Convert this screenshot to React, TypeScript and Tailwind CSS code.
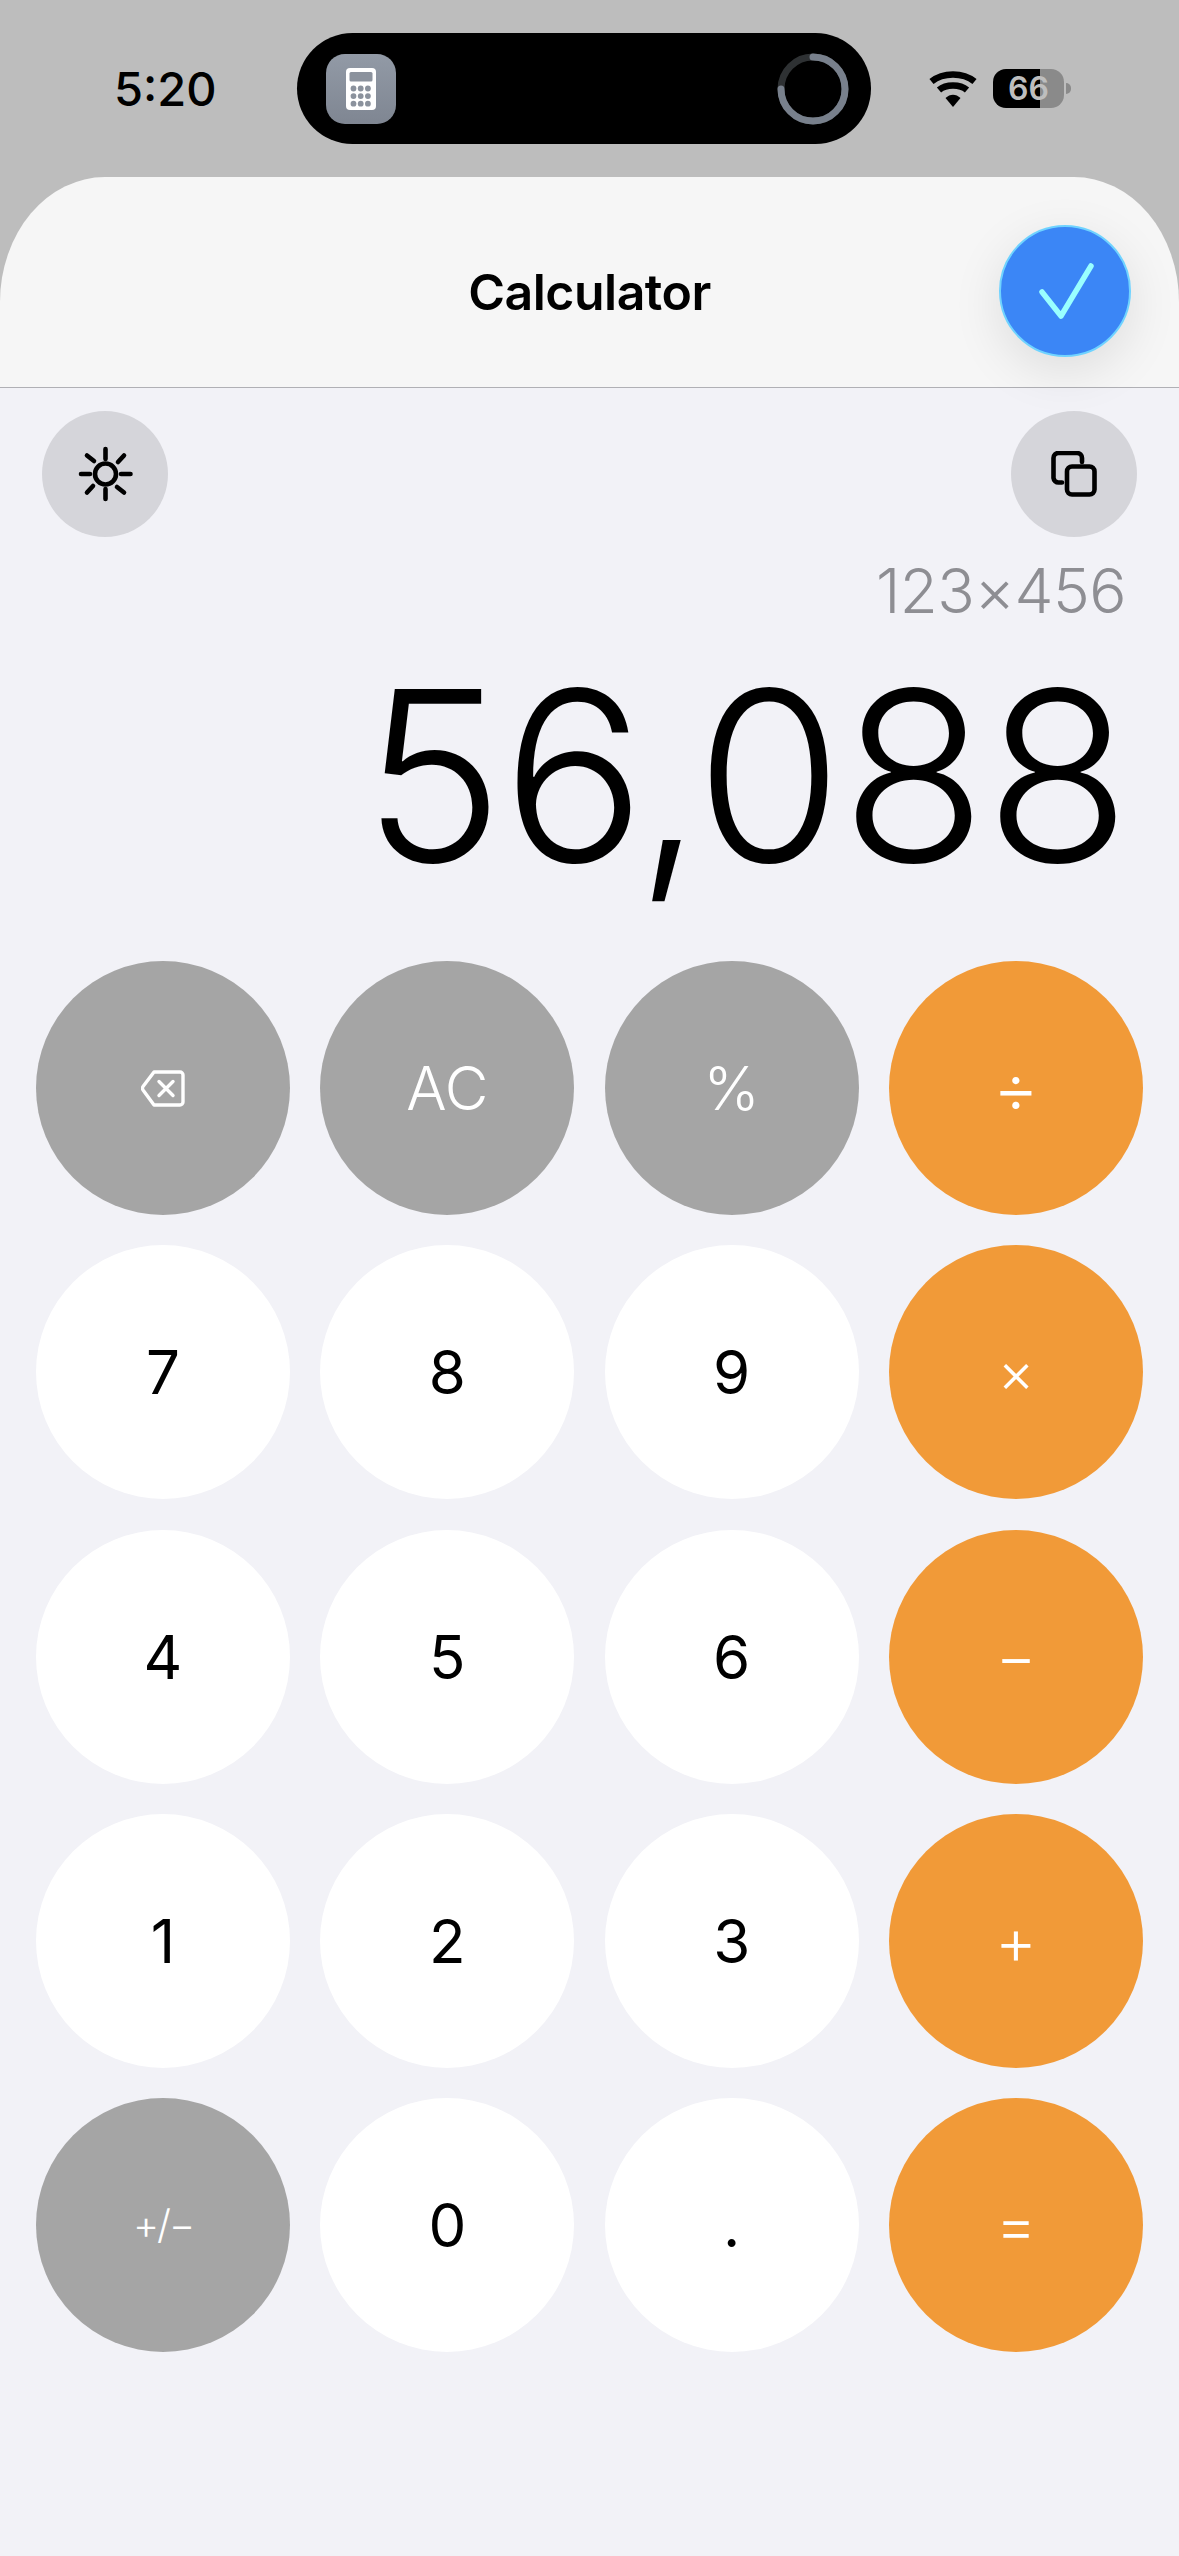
type Tone = 'gray' | 'white' | 'orange';

interface Key {
  label: string;
  tone: Tone;
  size?: string;
}

const TONE_CLASS: Record<Tone, string> = {
  gray: 'bg-[#a5a5a5] text-white font-[350]',
  white: 'bg-white text-black font-[380]',
  orange: 'bg-[#f19a38] text-white font-[350]',
};

const KEYS: Key[] = [
  { label: 'back', tone: 'gray' },
  { label: 'AC', tone: 'gray' },
  { label: '%', tone: 'gray' },
  { label: '÷', tone: 'orange', size: 'text-[70px]' },
  { label: '7', tone: 'white' },
  { label: '8', tone: 'white' },
  { label: '9', tone: 'white' },
  { label: '×', tone: 'orange', size: 'text-[56px]' },
  { label: '4', tone: 'white' },
  { label: '5', tone: 'white' },
  { label: '6', tone: 'white' },
  { label: '−', tone: 'orange', size: 'text-[62px]' },
  { label: '1', tone: 'white' },
  { label: '2', tone: 'white' },
  { label: '3', tone: 'white' },
  { label: '+', tone: 'orange', size: 'text-[64px]' },
  { label: '+/−', tone: 'gray', size: 'text-[40px] tracking-[-2px]' },
  { label: '0', tone: 'white' },
  { label: '.', tone: 'white' },
  { label: '=', tone: 'orange', size: 'text-[62px]' },
];

function BackspaceIcon() {
  return (
    <svg width="44" height="37" viewBox="0 0 44 37" fill="none" stroke="white" strokeWidth="3.4" strokeLinecap="round" strokeLinejoin="round">
      <path d="M13 2h26a3 3 0 0 1 3 3v27a3 3 0 0 1-3 3H13L2 20a3 3 0 0 1 0-3.4z" />
      <path d="M18 11.5l14 14M32 11.5l-14 14" />
    </svg>
  );
}

function SunIcon() {
  return (
    <svg width="56" height="56" viewBox="0 0 56 56" fill="none" stroke="black" strokeWidth="4.6" strokeLinecap="round">
      <circle cx="28.500" cy="28" r="10.5" />
      <path d="M28.500 3v10M28.500 43v10M4 28h9M44 28h9.500M10 9.500l7 5.500M40 41l7 5.500M47 9.500l-6 6.500M16 40l-6 6.500" />
    </svg>
  );
}

function CopyIcon() {
  return (
    <svg width="46" height="46" viewBox="0 0 46 46" fill="none" stroke="black" strokeWidth="4.6" strokeLinecap="round" strokeLinejoin="round">
      <path d="M31 11V7a5 5 0 0 0-5-5H7.500a5 5 0 0 0-5 5v20a5 5 0 0 0 5 4.500H11" />
      <rect x="16" y="15.500" width="27.500" height="28" rx="5" />
    </svg>
  );
}

function CalcGlyph() {
  const dots = [0, 1, 2].flatMap((r) => [0, 1, 2].map((c) => [7.5 + c * 7.2, 20.5 + r * 7.6]));
  return (
    <svg width="30" height="42" viewBox="0 0 30 42">
      <rect width="30" height="42" rx="4" fill="white" />
      <rect x="3.500" y="4" width="23" height="9.500" rx="1.500" fill="#8b929d" />
      {dots.map(([x, y]) => (
        <circle key={`${x}-${y}`} cx={x} cy={y} r="2.900" fill="#8b929d" />
      ))}
    </svg>
  );
}

function Ring() {
  return (
    <svg width="72" height="72" viewBox="0 0 72 72" fill="none" strokeWidth="7">
      <circle cx="36" cy="36" r="32" stroke="#2e3133" />
      <path d="M36 4a32 32 0 1 1-32 32" stroke="#78808c" strokeLinecap="round" />
    </svg>
  );
}

function WifiIcon() {
  return (
    <svg width="48" height="36" viewBox="0 0 48 36" fill="none" stroke="black" strokeWidth="6.500">
      <path d="M2.500 10.500C14 1 34 1 45.500 10.500" />
      <path d="M10 19C17 13 31 13 38 19" />
      <path d="M16.500 27L24 36 31.500 27C27 22.500 21 22.500 16.500 27z" fill="black" stroke="none" />
    </svg>
  );
}

function Battery() {
  return (
    <div className="flex items-center gap-[2px]">
      <div className="relative flex h-[39px] w-[71px] items-center justify-center overflow-hidden rounded-[13px] bg-[linear-gradient(90deg,#000_66%,#8a8a8a_66%)]">
        <span className="text-[32px] font-semibold leading-none text-[#bebebe]">66</span>
      </div>
      <div className="h-[11px] w-[5px] rounded-r-full bg-[#8a8a8a]" />
    </div>
  );
}

export default function App() {
  return (
    <div className="flex h-[2556px] w-[1179px] flex-col overflow-hidden bg-[#f2f2f7] font-[family-name:Inter,sans-serif]">
      <div className="bg-[#bdbdbd]">
        {/* Status bar */}
        <div className="flex h-[177px] items-start pl-[114px] pt-[33px]">
          <div className="flex h-[111px] w-[102px] items-center text-[47px] font-medium leading-none text-black">5:20</div>
          <div className="ml-[81px] flex h-[111px] w-[574px] items-center justify-between rounded-full bg-black pl-[29px] pr-[22px]">
            <div className="flex h-[70px] w-[70px] items-center justify-center rounded-[19px] bg-gradient-to-b from-[#929aa6] to-[#7f8692]">
              <CalcGlyph />
            </div>
            <Ring />
          </div>
          <div className="ml-[58px] flex h-[111px] items-center gap-[16px]">
            <WifiIcon />
            <Battery />
          </div>
        </div>

        {/* Sheet header */}
        <div className="relative flex h-[211px] items-center justify-center rounded-t-[105px_125px] border-b border-[#b0b0b5] bg-[#f6f6f6] pt-[20px]">
          <span className="text-[50px] font-semibold leading-none tracking-[-0.5px] text-black">Calculator</span>
          <button
            type="button"
            className="absolute right-[48px] top-[48px] flex h-[132px] w-[132px] items-center justify-center rounded-full border-2 border-[#6fd3ff] bg-[#3b86f6] shadow-[0_14px_50px_rgba(0,0,0,0.1)]"
          >
            <svg width="60" height="60" viewBox="0 0 60 60" fill="none" stroke="#99ffff" strokeWidth="5.500" strokeLinecap="round" strokeLinejoin="round">
              <path d="M7 31l19 24 30-50" />
            </svg>
          </button>
        </div>
      </div>

      {/* Toolbar */}
      <div className="flex justify-between pl-[42px] pr-[42px] pt-[23px]">
        <div className="flex h-[126px] w-[126px] items-center justify-center rounded-full bg-[#d5d5da]">
          <SunIcon />
        </div>
        <div className="flex h-[126px] w-[126px] items-center justify-center rounded-full bg-[#d5d5da]">
          <CopyIcon />
        </div>
      </div>

      {/* Display */}
      <div className="mt-[16px] pr-[53px] text-right text-[62px] font-light leading-[76px] tracking-[-0.5px] text-[#8e8e93]">123×456</div>
      <div className="mt-[26px] pr-[50px] text-right text-[238px] font-light leading-[240px] tracking-[-1.5px] text-black">56,088</div>

      {/* Keypad */}
      <div className="mt-[66px] grid grid-cols-[repeat(4,254px)] justify-between gap-y-[30.25px] px-[36px]">
        {KEYS.map((key) => (
          <button
            type="button"
            key={key.label}
            className={`flex h-[254px] w-[254px] items-center justify-center rounded-full leading-none ${TONE_CLASS[key.tone]} ${key.size ?? 'text-[60px]'}`}
          >
            {key.label === 'back' ? <BackspaceIcon /> : key.label}
          </button>
        ))}
      </div>
    </div>
  );
}
